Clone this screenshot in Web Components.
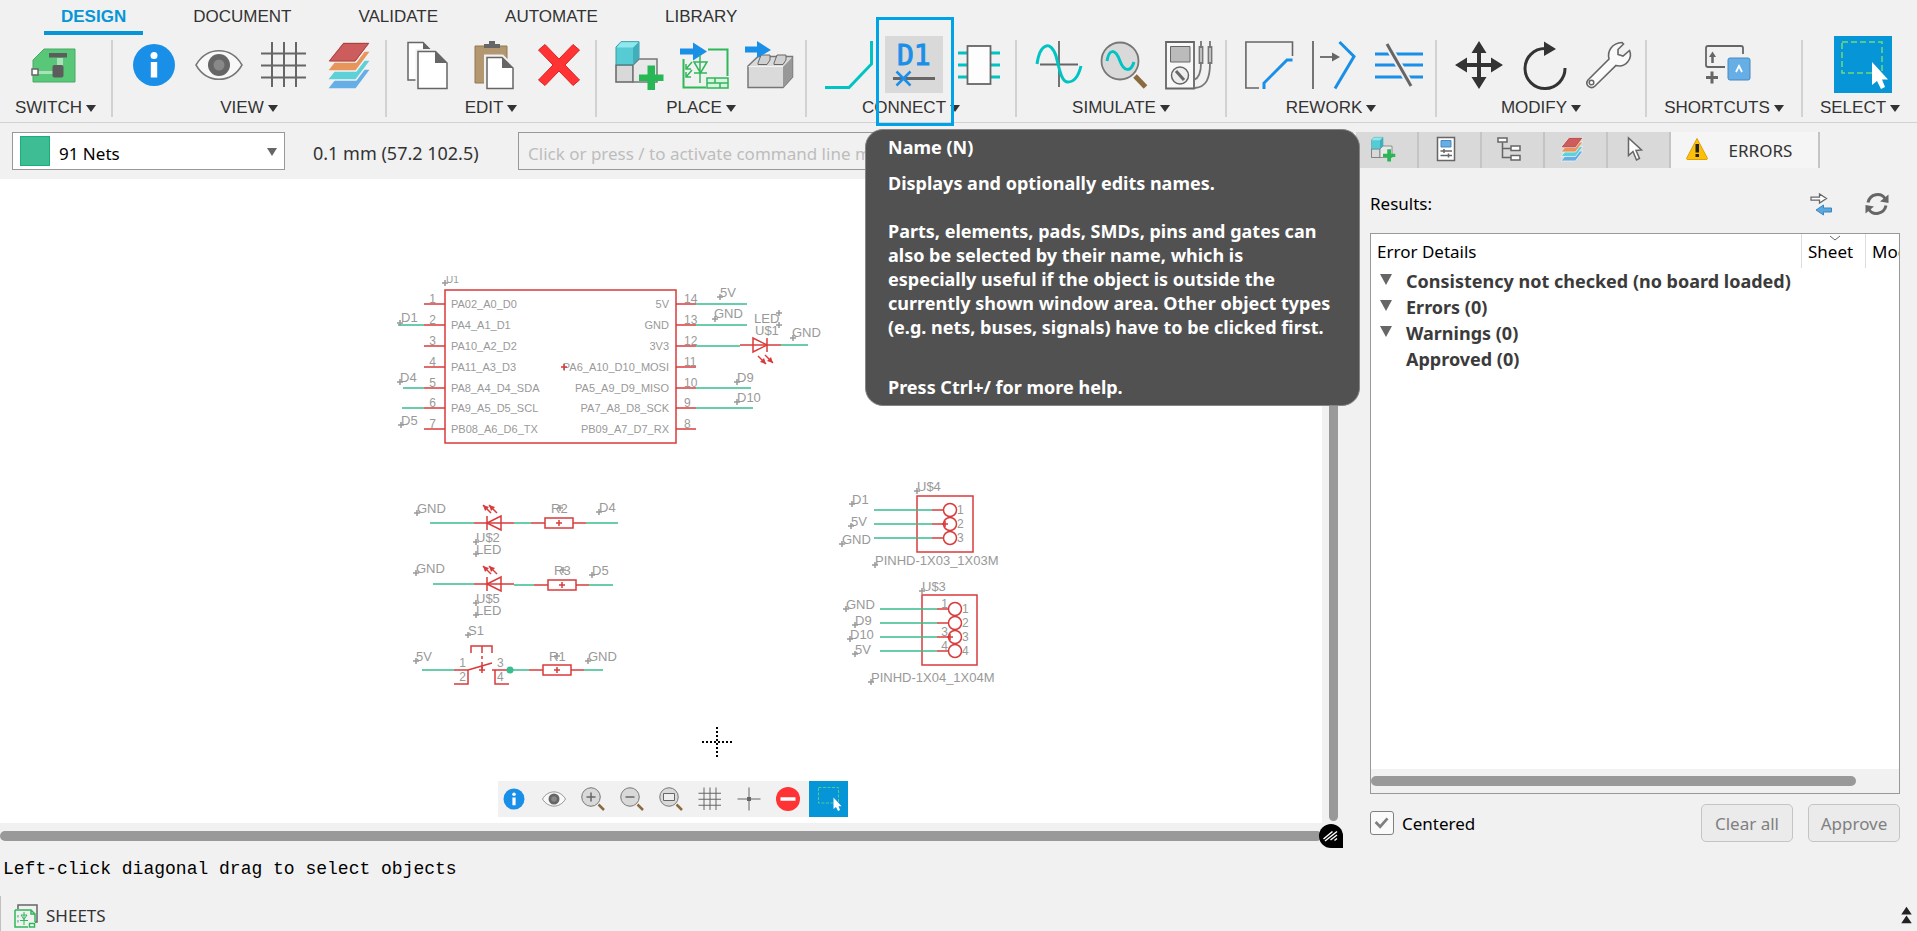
<!DOCTYPE html>
<html lang="en">
<head>
<meta charset="utf-8">
<title>Schematic editor</title>
<style>
  html, body { margin: 0; }
  body { background: #f1f1f1; color: #000; font-family: "Noto Sans", "Open Sans", sans-serif; font-size: 17px; }
</style>
</head>
<body>
<eda-app></eda-app>

<script>
const ICONS = {
  board: `<g transform="translate(-5 0)"><path d="M15 8H46V41H4V19Z" fill="#58c878" stroke="#48a868"/><path d="M28 17h6v10h-6z" fill="#a9e2b8"/><path d="M8 30h16v3H8z" fill="#a9e2b8"/><path d="M20 12h18v4.500h-18z" fill="#5c5c5c"/><rect x="23.500" y="24" width="11" height="12.500" rx="2" fill="#5c5c5c"/><rect x="3" y="28" width="6" height="6" fill="#fff" stroke="#666" stroke-width="1.500"/></g>`,
  info: `<circle cx="24" cy="24" r="21" fill="#1a8fe8"/><circle cx="24" cy="14.500" r="3.500" fill="#fff"/><path d="M20.800 21h6.400v15.500h-6.400z" fill="#fff"/>`,
  eye: `<path d="M1 24C12 5 36 5 47 24C36 43 12 43 1 24Z" fill="#f8f8f8" stroke="#777" stroke-width="1.500"/><circle cx="24" cy="24" r="11" fill="#666"/><circle cx="24" cy="24" r="5.500" fill="#888"/>`,
  grid: `<path d="M12 1v45M24 1v45M36 1v45M1 12.500h45M1 24.500h45M1 36.500h45" stroke="#666" stroke-width="2" fill="none"/>`,
  layers: `<g stroke="#f1f1f1" stroke-width="1.500"><path d="M18 28H46L31 48H2Z" fill="#66aee6"/><path d="M18 19H46L31 39H2Z" fill="#5fd0d8"/><path d="M18 10H46L31 30H2Z" fill="#e8955c"/><path d="M18 1H46L31 21H2Z" fill="#cd5c5c"/></g><path d="M18.500 2.500H43.500L30 20H4.500Z" fill="none" stroke="#a94444"/>`,
  copy: `<path d="M3 1.500H18L26 9.500V39H3Z" fill="#fff" stroke="#666" stroke-width="1.500"/><path d="M18 1v9h9z" fill="#666"/><path d="M13 10.500H30.500L42 22V47.500H13Z" fill="#fff" stroke="#f1f1f1" stroke-width="5"/><path d="M13 10.500H30.500L42 22V47.500H13Z" fill="#fff" stroke="#666" stroke-width="1.500"/><path d="M30 10v12h12z" fill="#666"/>`,
  paste: `<path d="M5 5H37V42H5Z" fill="#b39770" stroke="#93794f"/><path d="M14 3h5V0h6v3h5v4H14z" fill="#666"/><path d="M16.500 16H32L43 27V48H16.500Z" fill="#fff" stroke="#f1f1f1" stroke-width="5"/><path d="M17 16.500H32L43 27V47.500H17Z" fill="#fff" stroke="#666" stroke-width="1.500"/><path d="M32 16v11h11z" fill="#666"/>`,
  del: `<path d="M10 3.500L24 18L38 3.500L44.500 9L30 24L44.500 39L38 44.500L24 30L10 44.500L3.500 39L18 24L3.500 9Z" fill="#ff3333" stroke="#d92424"/>`,
  addpart: `<path d="M1 24H18V41H1Z" fill="#d9d9d9" stroke="#666" stroke-width="1.500"/><path d="M18 24L24 18H42V41H18Z" fill="#e8e8e8" stroke="#777" stroke-width="1.500"/><path d="M1 6L6 0.700H24V17L18 23.500H1Z" fill="#56cbd4" stroke="#3b9ba6"/><path d="M1.500 6.500L6 1.200H23.500L18 6.500Z" fill="#8ee8ee"/><path d="M18 7L24 1V17L18 23.500Z" fill="#41aebc"/><path d="M32.500 24.500h7.500v9h8.500v6.500h-8.500v9h-7.500v-9h-8.500v-6.500h8.500z" fill="#27b755"/>`,
  sch: `<path d="M3.500 18V46.500H26M28 8.500H47.500V35" stroke="#2fb75a" stroke-width="2" fill="none"/><path d="M0 7.500h13V1.500L27 10.500L13 19.500V13.500H0Z" fill="#1a8fe8"/><path d="M20 14v28M14 21h13L20.500 32ZM14 32h13M12 21l-6 7m0-5v5h5M12 29l-6 7m0-5v5h5" stroke="#2fb75a" stroke-width="1.500" fill="none"/><path d="M27 37H48V47H27ZM27 42H48M35 37v5M40 42v5" stroke="#2fb75a" stroke-width="1.500" fill="#d8f5e0"/>`,
  brick: `<path d="M3 25L13 15.500H47.500V36L38 46.500H3Z" fill="#dadada" stroke="#777" stroke-width="1.500"/><path d="M38 26L47.500 16V36L38 46.500Z" fill="#989898"/><path d="M3.500 25.500H38" stroke="#f4f4f4"/><path d="M13 22L16 14H25V19L22 23.500H13Z" fill="#d0d0d0" stroke="#666"/><path d="M29 22L32 14H41V19L38 23.500H29Z" fill="#d0d0d0" stroke="#666"/><path d="M0 5.500h12V0L26 9L12 17V11.500H0Z" fill="#1a8fe8"/>`,
  net: `<path d="M0 46.500H24L46.500 23V0" fill="none" stroke="#00c4c4" stroke-width="3"/>`,
  name: `<text x="7" y="23.500" font-family="DejaVu Sans Mono, monospace" font-size="28" fill="#1a8fe8" stroke="#1a8fe8">D1</text><path d="M3 37.500h42" stroke="#666" stroke-width="3"/><path d="M6.500 30.500l14 14M20.500 30.500l-14 14" stroke="#1a8fe8" stroke-width="2.500"/>`,
  chip: `<path d="M3 12h10M35 12h10M3 24h10M35 24h10M3 36h10M35 36h10" stroke="#00c4c4" stroke-width="3"/><rect x="12.500" y="5" width="23" height="38" fill="#fdfdfd" stroke="#666" stroke-width="1.800"/>`,
  sine: `<path d="M24 0V46M5 23.500H43" stroke="#666" stroke-width="1.800"/><path d="M2 23C5 2 16 -1 21 15C24 26 26 41 33 41C40 41 44 33 46 25" fill="none" stroke="#00c4c4" stroke-width="3"/>`,
  probe: `<path d="M35 35L45.500 46" stroke="#8a6a40" stroke-width="5"/><circle cx="20" cy="20" r="18.500" fill="#d9d9d9" stroke="#777" stroke-width="1.800"/><path d="M7 20C9 8 15 7 20 20C24 31 31 31 34 21" fill="none" stroke="#00c4c4" stroke-width="3"/>`,
  meter: `<path d="M1 1H29V47.500H1Z" fill="#f8f8f8" stroke="#666" stroke-width="1.800"/><path d="M5.500 5.500H25V21H5.500Z" fill="#bbb" stroke="#666"/><circle cx="15" cy="34.500" r="8.500" fill="#eee" stroke="#666" stroke-width="1.500"/><path d="M11 30l8 9" stroke="#666" stroke-width="3"/><path d="M36 0v6M45 0v6M34.500 6h3v16h-3zM43.500 6h3v16h-3zM36 22C36 32 34 37 29 39M45 22C45 38 41 46 30 47" fill="none" stroke="#777" stroke-width="1.800"/>`,
  miter: `<path d="M47.500 15V1H0.900V47H14" fill="none" stroke="#666" stroke-width="1.600"/><path d="M19 48V42L42 19H47.500" fill="none" stroke="#1a8fe8" stroke-width="3"/>`,
  split: `<path d="M3 0V48" stroke="#666" stroke-width="1.800"/><path d="M10 16H24" stroke="#666" stroke-width="1.800"/><path d="M22 11.500L30 16L22 20.500Z" fill="#666"/><path d="M29.500 1L44 15.500L25 47.500" fill="none" stroke="#1a8fe8" stroke-width="3"/>`,
  slice: `<path d="M0 13H48M0 24H48M0 36H48" stroke="#1a8fe8" stroke-width="3"/><path d="M12 3L36 45" stroke="#f1f1f1" stroke-width="7"/><path d="M12 3L36 45" stroke="#666" stroke-width="3"/>`,
  move: `<path d="M24 0L31.500 12H26V22H36V16.500L48 24L36 31.500V26H26V36H31.500L24 48L16.500 36H22V26H12V31.500L0 24L12 16.500V22H22V12H16.500Z" fill="#333"/>`,
  rotate: `<path d="M25 7.500A20 20 0 1 0 45 27" fill="none" stroke="#333" stroke-width="3"/><path d="M24 0.500L36 8L24 15Z" fill="#333"/>`,
  wrench: `<path d="M3 39L24 18C22 10 27 2 37 1.500L38.500 3L33 8.500V13.500L38 15L44.500 9.500C48 17 41 27 31 24.500L10 45C6 49 -1 44 3 39Z" fill="#fafafa" stroke="#666" stroke-width="1.600"/><circle cx="6.500" cy="41.500" r="2.300" fill="none" stroke="#666" stroke-width="1.500"/>`,
  shortcut: `<path d="M40 13V7Q40 5 38 5H5Q3 5 3 7V24Q3 26 5 26H22" fill="none" stroke="#666" stroke-width="1.800"/><path d="M9.500 22V14" stroke="#666" stroke-width="2.500"/><path d="M6 16L9.500 10.500L13 16Z" fill="#666"/><path d="M9 30.500V42.500M3 36.500H15" stroke="#666" stroke-width="3"/><rect x="25" y="17" width="22" height="22" rx="2" fill="#66aee6" stroke="#4a88bf"/><path d="M33 31L36 25L39 31" fill="none" stroke="#fff" stroke-width="1.800"/>`,
  select: `<path d="M3 1H43V32H3Z" fill="none" stroke="#6fdc7c" stroke-width="1.500" stroke-dasharray="6 3"/><path d="M33 21V44L38 40L42 48L46 46L43 38.500H49Z" fill="#fff"/>`,
  zoomin: `<path d="M35 35L46 46" stroke="#8a6a40" stroke-width="5"/><circle cx="20" cy="20" r="18.500" fill="#d9d9d9" stroke="#777" stroke-width="2"/><path d="M20 11v18M11 20h18" stroke="#666" stroke-width="3"/>`,
  zoomout: `<path d="M35 35L46 46" stroke="#8a6a40" stroke-width="5"/><circle cx="20" cy="20" r="18.500" fill="#d9d9d9" stroke="#777" stroke-width="2"/><path d="M11 20h18" stroke="#666" stroke-width="3"/>`,
  zoomfit: `<path d="M35 35L46 46" stroke="#8a6a40" stroke-width="5"/><circle cx="20" cy="20" r="18.500" fill="#d9d9d9" stroke="#777" stroke-width="2"/><path d="M9 13h22v14H9z" fill="#eee" stroke="#666" stroke-width="2"/>`,
  origin: `<path d="M24 1V47M1 24H47" stroke="#666" stroke-width="2"/><path d="M20 20h8v8h-8z" fill="#666"/>`,
  stop: `<circle cx="24" cy="24" r="24" fill="#ff3333"/><path d="M9 20.500h30v7H9z" fill="#fff"/>`,
  inspector: `<path d="M7 1H41V47H7Z" fill="#fff" stroke="#666" stroke-width="3"/><path d="M14 7H34V20H14Z" fill="#66aee6" stroke="#4a88bf" stroke-width="2"/><path d="M13 28H36M13 37H36M20 24v8M29 33v8" stroke="#666" stroke-width="3"/>`,
  tree: `<path d="M11 11V41H28M11 23H28" fill="none" stroke="#666" stroke-width="3"/><path d="M2 2H20V10H2ZM28 18H46V27H28ZM28 37H46V46H28Z" fill="#fff" stroke="#666" stroke-width="3"/>`,
  pointer: `<path d="M11 2V37L20 29L27 46L33 43L26 27L37 26Z" fill="#fff" stroke="#666" stroke-width="3"/>`,
  warn: `<path d="M24 3L45 43Q45 45 42 45H6Q3 45 3 43Z" fill="#fbbf0c" stroke="#e0a100" stroke-width="2"/><path d="M21 14h7v17h-7zM21 34h7v6h-7z" fill="#222"/>`,
  swap: `<path d="M4 10H21V4L35 13L21 22V16H4Z" fill="#fff" stroke="#666" stroke-width="2.500"/><path d="M45 32H29V26L14 36L29 46V40H45Z" fill="#5ba8e0" stroke="#3a86c0" stroke-width="2"/>`,
  refresh: `<path d="M6 21C10 3 32 0 40 13M42 27C38 45 16 48 8 35" fill="none" stroke="#666" stroke-width="6"/><path d="M47 5V22L30 19ZM1 43V26L18 29Z" fill="#666"/>`,
  sheets: `<path d="M8 10V2H46V36H42" fill="none" stroke="#666" stroke-width="3"/><path d="M2 12H34L42 20V36M28 46H2V12M34 12V20H42" fill="none" stroke="#2fb75a" stroke-width="3"/><path d="M20 16V42M14 22H26L20 31ZM12 33H28M8 22v5M8 32v5" fill="none" stroke="#2fb75a" stroke-width="2"/><path d="M31 39H41V46H31Z" fill="#fff" stroke="#2fb75a" stroke-width="3"/>`,
  top: `<path d="M24 6L36 24H12ZM24 26L36 44H12Z" fill="#222"/>`,
  brand: `<path d="M24 0A24 24 0 0 1 48 24V48H24A24 24 0 0 1 24 0Z" fill="#000"/><path d="M9 30L27 15M12 34L36 15M23 32L36 22M31 33L36 29" stroke="#fff" stroke-width="3"/>`
};

class UIBase extends HTMLElement {
  connectedCallback() {
    if (this.shadowRoot) return;
    this.attachShadow({ mode: 'open' }).innerHTML = this.render();
  }
}

customElements.define('ui-icon', class extends UIBase {
  render() {
    const s = this.getAttribute('size') || 48;
    return `<style>:host{display:block;flex:none}svg{display:block;overflow:visible}</style>
    <svg width="${s}" height="${s}" viewBox="0 0 48 48" aria-hidden="true">${ICONS[this.getAttribute('name')]}</svg>`;
  }
});

customElements.define('tool-button', class extends UIBase {
  render() {
    return `<style>
      :host{display:block;position:relative}
      button{display:flex;align-items:center;justify-content:center;width:58px;height:57px;padding:0;border:0;background:none}
      :host([state=hover]) button{background:#d9d9d9}
      :host([state=active]) button{background:#0696d7}
      :host([state=hover])::after{content:"";position:absolute;z-index:3;inset:-19px -11px -33px -9px;border:3px solid #00a2e8}
    </style><button aria-label="${this.getAttribute('icon')}"><ui-icon name="${this.getAttribute('icon')}"></ui-icon></button>`;
  }
});

customElements.define('tool-group', class extends UIBase {
  render() {
    return `<style>
      :host{display:flex;min-width:0}
      .body{flex:1;min-width:0}
      .tools{display:flex;justify-content:center;gap:7px;padding-left:5px}
      .label{display:flex;align-items:center;justify-content:center;gap:4px;width:100%;height:30px;padding:0;border:0;background:none;
        font:17px "Liberation Sans",Arial,sans-serif;color:#333;white-space:nowrap}
      i{border:5px solid transparent;border-top:7px solid #333;border-bottom:0}
      .sep{width:2px;margin:4px 0 6px;background:#d2d2d2}
      :host(:last-of-type) .sep{display:none}
    </style>
    <div class="body"><div class="tools"><slot></slot></div><button class="label">${this.getAttribute('label')}<i></i></button></div><div class="sep"></div>`;
  }
});

customElements.define('eda-menu', class extends UIBase {
  render() {
    return `<style>
      :host{display:block}
      nav{display:flex;gap:33px;padding-left:44px}
      a{box-sizing:border-box;height:35px;padding:0 17px;border-bottom:4px solid transparent;line-height:33px;
        font-family:"Liberation Sans",Arial,sans-serif;font-size:17px;color:#333;text-decoration:none}
      a[aria-current]{font-weight:700;color:#0696d7;border-color:#0696d7}
    </style><nav><a href="#design" aria-current="page">DESIGN</a><a href="#document">DOCUMENT</a><a href="#validate">VALIDATE</a><a href="#automate">AUTOMATE</a><a href="#library">LIBRARY</a></nav>`;
  }
});

customElements.define('eda-ribbon', class extends UIBase {
  render() {
    const groups = [
      ['SWITCH', 'board'], ['VIEW', 'info eye grid layers'], ['EDIT', 'copy paste del'],
      ['PLACE', 'addpart sch brick'], ['CONNECT', 'net name:hover chip'], ['SIMULATE', 'sine probe meter'],
      ['REWORK', 'miter split slice'], ['MODIFY', 'move rotate wrench'], ['SHORTCUTS', 'shortcut'], ['SELECT', 'select:active']
    ];
    return `<style>
      :host{display:block;border-bottom:1px solid #d2d2d2}
      .row{display:grid;grid-template-columns:113fr 274fr 210fr 210fr 210fr 210fr 210fr 210fr 156fr 114fr;padding-top:1px;height:86px}
    </style><eda-menu></eda-menu><div class="row">${groups.map(([l, t]) =>
      `<tool-group label="${l}">${t.split(' ').map(x => { const [n, s] = x.split(':'); return `<tool-button icon="${n}" state="${s || ''}"></tool-button>`; }).join('')}</tool-group>`).join('')}</div>`;
  }
});

customElements.define('eda-parambar', class extends UIBase {
  render() {
    return `<style>
      :host{display:flex;align-items:center;height:56px;padding:0 0 0 12px;box-sizing:border-box}
      .layer{position:relative;width:273px;height:38px}
      select{appearance:none;box-sizing:border-box;width:100%;height:100%;padding:4px 46px 0;border:1px solid #999;border-radius:0;background:#fff;color:#000;font:17px "Noto Sans",sans-serif}
      .sw{position:absolute;left:8px;top:4px;width:28px;height:28px;border:1px solid #17b07c;background:#3ebc93;pointer-events:none}
      .ar{position:absolute;right:8px;top:16px;border:5px solid transparent;border-top:8px solid #666;border-bottom:0;pointer-events:none}
      output{width:205px;padding:4px 0 0 28px;font-size:18px;color:#333;white-space:nowrap}
      input{flex:1;min-width:0;box-sizing:border-box;height:38px;border:1px solid #999;padding:4px 9px 0;background:#f1f1f1;font:17px "Noto Sans",sans-serif}
      input::placeholder{color:#bdbdbd;opacity:1}
    </style>
    <div class="layer"><select aria-label="Layer"><option>91 Nets</option></select><span class="sw"></span><span class="ar"></span></div>
    <output>0.1 mm (57.2 102.5)</output>
    <input type="text" aria-label="Command line" placeholder="Click or press / to activate command line mode">`;
  }
});

customElements.define('eda-schematic', class extends UIBase {
  render() {
    const R = '#d93a3a', G = '#38bd8e';
    let o = '';
    const line = (c, x1, y1, x2, y2) => o += `<path d="M${x1} ${y1}L${x2} ${y2}" stroke="${c}"/>`;
    const text = (t, x, y, s = 13, a = 'start') => o += `<text x="${x}" y="${y}" font-size="${s}" text-anchor="${a}">${t}</text>`;
    const cross = (x, y, c = '#999') => o += `<path d="M${x - 3} ${y}h6M${x} ${y - 3}v6" stroke="${c}"/>`;
    const box = (x, y, w, h) => o += `<rect x="${x}" y="${y}" width="${w}" height="${h}" stroke="${R}" fill="none"/>`;
    const label = (t, x, y, cx = x, cy = y) => { text(t, x, y); cross(cx, cy); };
    const ray = (x, y, d) => o += `<path d="M${x} ${y}l${-8 * d} ${-8 * d}" stroke="${R}"/><path d="M${x} ${y}l${-6 * d} ${-2 * d}l${4 * d} ${-4 * d}z" fill="${R}"/>`;

    box(445, 289, 231, 153);
    o += '<g clip-path="url(#u1)">'; text('U1', 446, 282, 10); o += '</g>'; cross(445, 282);
    const L = ['PA02_A0_D0', 'PA4_A1_D1', 'PA10_A2_D2', 'PA11_A3_D3', 'PA8_A4_D4_SDA', 'PA9_A5_D5_SCL', 'PB08_A6_D6_TX'];
    const Q = ['5V', 'GND', '3V3', 'PA6_A10_D10_MOSI', 'PA5_A9_D9_MISO', 'PA7_A8_D8_SCK', 'PB09_A7_D7_RX'];
    const Y = [303, 324, 345, 366, 387, 407, 428];
    Y.forEach((y, i) => {
      line(R, 424, y, 445, y); line(R, 676, y, 696, y);
      text(L[i], 451, y + 4, 11); text(Q[i], 669, y + 4, 11, 'end');
      text(i + 1, 436, y - 1, 12, 'end'); text(14 - i, 684, y - 1, 12);
    });
    line(G, 398, 324, 424, 324); line(G, 403, 387, 424, 387); line(G, 402, 407, 424, 407);
    line(G, 696, 303, 747, 303); line(G, 696, 324, 747, 324); line(G, 696, 345, 740, 345);
    line(G, 696, 387, 751, 387); line(G, 696, 407, 753, 407);
    line(R, 740, 344, 781, 344); line(G, 781, 344, 808, 344);
    o += `<path d="M753 337V351L767 344ZM767 337V351" stroke="${R}" fill="none"/>`;
    ray(766, 363, 1); ray(773, 362, 1);
    cross(564, 366, R);
    label('D1', 401, 321, 400, 322); label('D4', 400, 381); label('D5', 401, 424);
    label('5V', 720, 296); label('GND', 714, 317, 715, 318);
    text('LED', 754, 322); cross(779, 312); text('U$1', 755, 334); cross(779, 324);
    label('GND', 792, 336, 793, 337); label('D9', 737, 381); label('D10', 737, 401);

    const res = (y, x0, rx, x1) => {
      line(G, x0, y, rx - 14, y); line(R, rx - 14, y, rx, y); box(rx, y - 5, 28, 10);
      line(R, rx + 28, y, rx + 41, y); line(G, rx + 41, y, x1, y); cross(rx + 14, y, R);
    };
    const branch = (y, x0, rx, d, name, r) => {
      line(G, x0, y, 474, y); line(R, 474, y, 514, y);
      o += `<path d="M501 ${y - 7}V${y + 7}L487 ${y}ZM487 ${y - 7}V${y + 7}" stroke="${R}" fill="none"/>`;
      ray(483, y - 18, -1); ray(489, y - 18, -1);
      label(name, 476, y + 19); label('LED', 476, y + 31);
      res(y + d, 514, rx, r);
    };
    branch(522, 430, 545, 0, 'U$2', 618); branch(583, 433, 548, 1, 'U$5', 613);
    label('GND', 417, 512); label('R2', 551, 512, 560, 507); label('D4', 599, 511);
    label('GND', 416, 572); label('R3', 554, 574, 563, 569); label('D5', 592, 574);
    label('S1', 468, 634); label('5V', 416, 660); label('R1', 549, 660, 557, 655); label('GND', 588, 660);
    line(G, 422, 669, 454, 669);
    o += `<path d="M454 669H468V683H454M468 669L492 662M492 669H509M495 669V683H509M471 652V645H492V652" stroke="${R}" fill="none"/><path d="M482 645V668" stroke="${R}" stroke-dasharray="7 3 3 3"/>`;
    cross(482, 669, R);
    text(1, 466, 666, 12, 'end'); text(2, 466, 680, 12, 'end'); text(3, 497, 666, 12); text(4, 497, 680, 12);
    res(669, 509, 543, 603);
    o += `<circle cx="510" cy="669" r="3.500" fill="${G}"/>`;

    box(917, 495, 56, 56);
    [509, 523, 537].forEach((y, i) => {
      line(G, 874, y, 932, y); line(R, 932, y, 944, y);
      o += `<circle cx="950" cy="${y}" r="6.500" stroke="${R}" fill="none"/>`; text(i + 1, 957, y + 4, 12);
    });
    cross(945, 523, R);
    label('U$4', 917, 490); label('D1', 852, 503); label('5V', 851, 525); label('GND', 842, 543); label('PINHD-1X03_1X03M', 875, 564);
    box(922, 594, 55, 70);
    [608, 622, 636, 650].forEach((y, i) => {
      line(G, 880, y, 937, y); line(R, 937, y, 949, y);
      o += `<circle cx="955" cy="${y}" r="6.500" stroke="${R}" fill="none"/>`; text(i + 1, 962, y + 4, 12);
      if (i !== 1) text(i + 1, 948, y - 1, 12, 'end');
    });
    cross(950, 636, R);
    label('U$3', 922, 590); label('GND', 846, 608); label('D9', 855, 624); label('D10', 850, 638); label('5V', 855, 653); label('PINHD-1X04_1X04M', 871, 681);
    o += `<path d="M702 741H733M717 726V757" stroke="#000" stroke-width="2" stroke-dasharray="2 2"/>`;

    return `<style>
      :host{display:block;position:relative;background:#fff;overflow:hidden}
      svg{position:absolute;inset:0;width:100%;height:100%;font-family:"Liberation Sans",Arial,sans-serif}
      text{fill:#999;stroke:none}
    </style><svg role="img" aria-label="Schematic"><defs><clipPath id="u1"><rect x="440" y="275" width="30" height="10"/></clipPath></defs><g transform="translate(0 -178)" stroke-width="1.500">${o}</g></svg>`;
  }
});

customElements.define('eda-viewbar', class extends UIBase {
  render() {
    return `<style>
      :host{display:flex;height:36px;background:#f1f1f1}
      button{display:flex;align-items:center;justify-content:center;box-sizing:border-box;width:39px;padding:0;border:0;background:none}
      button:first-of-type{width:36px;padding-right:4px}
      button:last-of-type{margin-left:2px;background:#0696d7}
    </style>${['info', 'eye', 'zoomin', 'zoomout', 'zoomfit', 'grid', 'origin', 'stop', 'select'].map(n =>
      `<button aria-label="${n}"><ui-icon name="${n}" size="24"></ui-icon></button>`).join('')}`;
  }
});

customElements.define('eda-workspace', class extends UIBase {
  render() {
    return `<style>
      :host{position:relative;flex:1;display:grid;grid-template:1fr 27px / 1fr 24px}
      .v{display:flex;justify-content:center;padding-bottom:2px}
      .v i{width:9px;border-radius:0 0 5px 5px;background:#999;margin-right:1px}
      .h{display:flex;align-items:center;padding-bottom:2px}
      .h i{flex:1;height:10px;border-radius:5px;background:#999}
      .brand{margin:1px 0 0 -3px}
      .dock{position:absolute;left:0;right:0;bottom:33px;display:flex;justify-content:center}
    </style>
    <eda-schematic></eda-schematic><div class="v"><i></i></div>
    <div class="h"><i></i></div><div class="brand"><ui-icon name="brand" size="24"></ui-icon></div>
    <div class="dock"><eda-viewbar></eda-viewbar></div>`;
  }
});

customElements.define('eda-results', class extends UIBase {
  render() {
    const rows = ['Consistency not checked (no board loaded)', 'Errors (0)', 'Warnings (0)', 'Approved (0)'];
    return `<style>
      :host{flex:1;display:flex;flex-direction:column;overflow:hidden;border:1px solid #999;background:#fff}
      .view{flex:1;overflow:hidden}
      table{table-layout:fixed;width:calc(100% + 60px);border-collapse:separate;border-spacing:0}
      th{box-sizing:border-box;height:34px;padding:0 0 0 6px;border-left:1px solid #ddd;text-align:left;font-weight:400;position:relative}
      th:first-child{border-left:0}
      th svg{position:absolute;left:27px;top:1px}
      td{height:26px;padding:0;font-size:18px;line-height:26px;font-weight:700;color:#3b3b3b}
      .c{display:flex;align-items:center;gap:14px;padding-left:9px}
      .c i{border:6px solid transparent;border-top:11px solid #666;border-bottom:0;margin-bottom:3px}
      .c.leaf i{visibility:hidden}
      .bar{height:24px;display:flex;align-items:center;box-sizing:border-box;background:#f1f1f1}
      .bar i{height:10px;width:485px;border-radius:5px;background:#999}
    </style>
    <div class="view"><table><colgroup><col><col style="width:64px"><col style="width:94px"></colgroup>
      <thead><tr><th>Error Details</th><th>Sheet<svg width="12" height="7"><path d="M1 1l5 4l5-4" fill="none" stroke="#666"/></svg></th><th>Module</th></tr></thead>
      <tbody>${rows.map((r, i) => `<tr><td colspan="3"><div class="c${i === 3 ? ' leaf' : ''}"><i></i>${r}</div></td></tr>`).join('')}</tbody></table></div>
    <div class="bar"><i></i></div>`;
  }
});

customElements.define('eda-panel', class extends UIBase {
  render() {
    return `<style>
      :host{display:flex;flex-direction:column;padding:9px 17px 8px 24px;box-sizing:border-box}
      .tabs{display:flex;height:36px;margin-left:-14px}
      .tabs button{display:flex;align-items:center;justify-content:center;box-sizing:border-box;width:63px;padding:0 7px 3px 0;border:0;border-right:2px solid #c4c4c4;background:#d9d9d9}
      .tabs .on{width:149px;gap:20px;padding:0 12px 0 0;background:#f5f5f5;color:#333;font:17px "Noto Sans",sans-serif}
      .tabs .on ui-icon{margin-bottom:3px}
      .head{display:flex;align-items:center;height:65px;padding:6px 11px 0 0;box-sizing:border-box;gap:32px}
      .head span{flex:1}
      .head button{padding:0;border:0;background:none}
      .foot{display:flex;align-items:center;gap:15px;margin-top:10px}
      label{display:flex;align-items:center;gap:8px;flex:1}
      input{appearance:none;width:24px;height:24px;margin:0;border:1px solid #808080;border-radius:3px;box-sizing:border-box;
        background:#fafafa url("data:image/svg+xml,%3Csvg xmlns='http://www.w3.org/2000/svg' viewBox='0 0 24 24'%3E%3Cpath d='M5 11l5 5l8-9' fill='none' stroke='%23808080' stroke-width='3'/%3E%3C/svg%3E")}
      .foot button{width:92px;height:38px;padding:0;border:1px solid #c4c4c4;border-radius:5px;background:#ebebeb;color:#808080;font:17px "Noto Sans",sans-serif}
    </style>
    <div class="tabs"><button aria-label="Place parts"><ui-icon name="addpart" size="24"></ui-icon></button><button aria-label="Inspector"><ui-icon name="inspector" size="24"></ui-icon></button><button aria-label="Design manager"><ui-icon name="tree" size="24"></ui-icon></button><button aria-label="Layers"><ui-icon name="layers" size="24"></ui-icon></button><button aria-label="Selection"><ui-icon name="pointer" size="24"></ui-icon></button><button class="on"><ui-icon name="warn" size="24"></ui-icon>ERRORS</button></div>
    <div class="head"><span>Results:</span><button aria-label="Swap"><ui-icon name="swap" size="24"></ui-icon></button><button aria-label="Refresh"><ui-icon name="refresh" size="24"></ui-icon></button></div>
    <eda-results></eda-results>
    <div class="foot"><label><input type="checkbox" checked>Centered</label><button disabled>Clear all</button><button disabled>Approve</button></div>`;
  }
});

customElements.define('eda-tooltip', class extends UIBase {
  render() {
    return `<style>
      :host{display:block;box-sizing:border-box;width:495px;padding:5px 24px 6px 22px;border:1px solid #858585;border-radius:18px;background:#515151;color:#fff;font-weight:700;font-size:18px;line-height:24px}
      ::slotted(p){margin:0 0 24px}
      ::slotted(p:first-child){margin-bottom:12px}
      ::slotted(p:nth-child(3)){margin-bottom:36px}
      ::slotted(p:last-child){margin-bottom:0}
    </style><slot></slot>`;
  }
});

customElements.define('eda-app', class extends UIBase {
  render() {
    return `<style>
      :host{display:flex;flex-direction:column;min-height:100vh}
      main{position:relative;flex:1;display:grid;grid-template-columns:1fr 571px}
      .left{display:flex;flex-direction:column;min-width:0}
      eda-tooltip{position:absolute;z-index:2;left:865px;top:6px}
      .status{height:46px;box-sizing:border-box;padding:9px 3px;font:18px/20px "Liberation Mono","Courier New",monospace}
      footer{display:flex;align-items:center;height:35px;box-sizing:border-box;padding:5px 0 0 13px;border-left:1px solid #c0c0c0;color:#333}
      footer button{display:flex;align-items:center;gap:8px;padding:0;border:0;background:none;color:#333;font:17px/24px "Noto Sans",sans-serif}
      footer .up{margin:0 0 4px auto}
    </style>
    <eda-ribbon></eda-ribbon>
    <main>
      <div class="left"><eda-parambar></eda-parambar><eda-workspace></eda-workspace></div>
      <eda-panel></eda-panel>
      <eda-tooltip role="tooltip"><p>Name (N)</p><p>Displays and optionally edits names.</p><p>Parts, elements, pads, SMDs, pins and gates can also be selected by their name, which is especially useful if the object is outside the currently shown window area. Other object types (e.g. nets, buses, signals) have to be clicked first.</p><p>Press Ctrl+/ for more help.</p></eda-tooltip>
    </main>
    <div class="status">Left-click diagonal drag to select objects</div>
    <footer><button><ui-icon name="sheets" size="24"></ui-icon>SHEETS</button><button class="up" aria-label="Expand"><ui-icon name="top" size="21"></ui-icon></button></footer>`;
  }
});
</script>
</body>
</html>
